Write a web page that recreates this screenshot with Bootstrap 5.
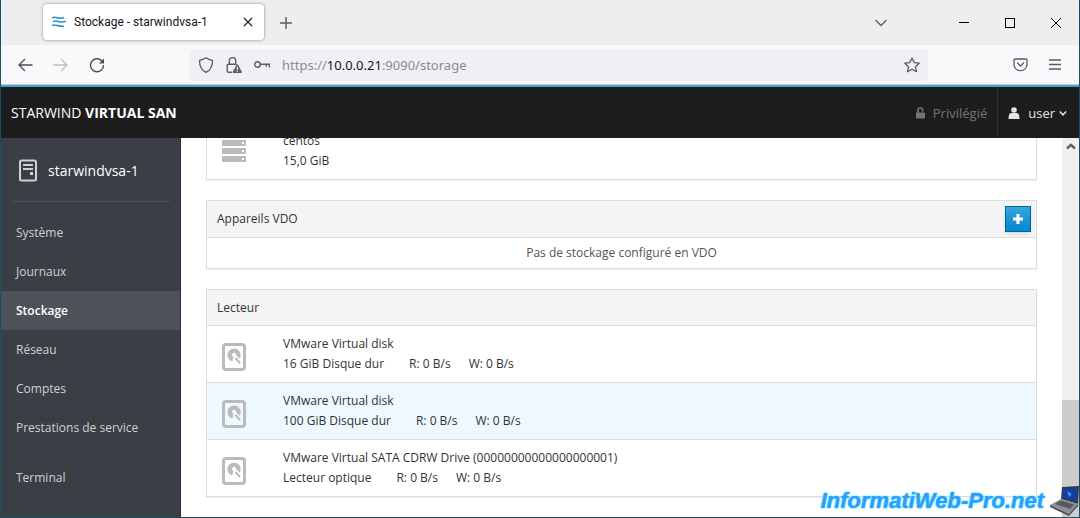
<!DOCTYPE html>
<html lang="fr">
<head>
<meta charset="utf-8">
<meta name="viewport" content="width=device-width, initial-scale=1">
<title>Stockage - starwindvsa-1</title>
<link href="https://cdn.jsdelivr.net/npm/bootstrap@5.3.0/dist/css/bootstrap.min.css" rel="stylesheet">
<style>
  body { font-family: "Open Sans", sans-serif; font-size: 12px; line-height: 20px; color: #333; }
  .window { height: 100vh; border: 1px solid #1f4e68; border-top: 0; }
  .window svg { display: block; flex: none; }
  .plain { background: none; border: 0; padding: 0; color: inherit; }
  .titlebar { height: 45px; background: #eeeeee; padding: 4px 18px 4px 42px; color: #15141a; }
  .tab { width: 221px; height: 36px; background: #fff; border-radius: 4px; box-shadow: 0 0 3px rgba(0,0,0,.45); padding: 0 10px 0 9px; color: #15141a; font-family: Roboto, sans-serif; }
  .window-controls { gap: 36px; color: #000; }
  .toolbar { height: 40px; background: #f9f9fb; border-bottom: 1px solid #ccc; padding: 0 17px 0 16px; color: #5b5b66; gap: 20px; }
  .urlbar { height: 32px; background: #f0f0f4; border-radius: 4px; margin-left: 65px; margin-right: 65px; padding: 0 8px; gap: 12px; }
  .address { font-family: "Noto Sans", sans-serif; font-size: 13px; color: #8b8b92; }
  .address b { font-weight: 400; color: #15141a; }
  .app-header { height: 53px; background: #1d1d1d; border-top: 2px solid #39a5dc; padding-left: 10px; color: #fff; font-size: 14px; flex: none; }
  .privileged { color: #72767b; padding-right: 10px; font-size: 13px; gap: 7px; }
  .account { border-left: 1px solid #333; padding: 0 12px 0 10px; color: #e4e4e4; font-size: 13px; gap: 8px; }
  .sidebar { width: 180px; background: #393f44; border-right: 1px solid #292e34; flex: none; }
  .host { height: 64px; margin: 0 10px 11px 11px; padding: 2px 0 0 6px; border-bottom: 1px solid #4d5258; gap: 10px; color: #fff; font-size: 14px; text-decoration: none; }
  .sidebar .nav-link { height: 39px; padding: 10px 15px; color: #d1d1d1; }
  .sidebar .nav-link.active { background: #4d5258; color: #fff; font-weight: 600; }
  .sidebar .nav-tools { padding-top: 11px; }
  .content { padding: 0 25px 20px; gap: 20px; background: #fff; }
  .panel { --bs-card-border-color: #ddd; --bs-card-border-radius: 0; --bs-card-inner-border-radius: 0; --bs-card-cap-bg: #f4f4f4; color: #333; flex: none; box-shadow: 0 1px 1px rgba(0,0,0,.05); }
  .panel .card-header { padding: 8px 10px 7px; }
  .panel .card-header.with-action { padding: 5px 5px 5px 10px; }
  .panel .empty-note { padding: 5px; color: #555; }
  .panel .list-group-item { padding: 8px 15px; border-color: #ddd; color: #333; gap: 37px; background: #fff; }
  .panel .list-group-item.hovered { background: #edf8ff; }
  .disk-icon { margin-top: 6px; }
  .rates { margin-left: 25px; gap: 18px; }
  .add-button { width: 26px; height: 26px; border: 1px solid #00659c; border-radius: 0; background: linear-gradient(#39a5dc, #0088ce); box-shadow: 0 2px 3px rgba(3,3,3,.1); }
  .scroller { width: 17px; background: #f0f0f0; flex: none; padding-top: 5px; }
  .thumb { flex: 117 0 0; background: #cdcdcd; }
  .track { flex: 257 0 0; }
  .watermark { right: 0; bottom: 0; font: italic 700 22px/32px "Liberation Sans", sans-serif; color: #2f9dfc; text-shadow: 0 0 2px #2fd5ff, 0 0 1px #2fd5ff; gap: 6px; }
</style>
</head>
<body>
<svg class="d-none" aria-hidden="true">
  <symbol id="disk" viewBox="0 0 24 28"><rect x="1.500" y="1.500" width="21" height="25" rx="2.500" fill="none" stroke="#bbb" stroke-width="3"/><path d="M12 5.500a6.800 6.800 0 0 1 6.700 6.800c0 1.300-.4 2.500-1 3.400L14 12a2 2 0 1 0-2.600 1.700l-1 4.800A6.600 6.600 0 0 1 12 5.500zM12.500 15.500l1.800-1.200 4.500 5.200-1.400 1.500z" fill="#bbb"/></symbol>
</svg>
<div class="window position-relative d-flex flex-column overflow-hidden">
  <div class="titlebar d-flex align-items-start flex-shrink-0">
    <div class="tab d-flex align-items-center">
      <svg width="14" height="12" viewBox="0 0 14 12" fill="none" stroke="#2b8fd0" stroke-width="1.500"><path d="M0 2c4-2.500 6 2 12-.5M1 5.800c4-2.500 6 2 13-.5M0 9.600c4-2.500 6 2 12 .5"/></svg>
      <span class="ms-2 flex-grow-1 text-nowrap">Stockage - starwindvsa-1</span>
      <button class="plain" aria-label="Fermer l'onglet"><svg width="12" height="12" viewBox="0 0 12 12" stroke="#222" stroke-width="1.200"><path d="M2 2l8 8M10 2l-8 8"/></svg></button>
    </div>
    <div class="d-flex align-items-center align-self-stretch flex-grow-1 ps-3">
      <button class="plain" aria-label="Nouvel onglet"><svg width="12" height="12" viewBox="0 0 12 12" stroke="#5b5b66" stroke-width="1.400"><path d="M6 0v12M0 6h12"/></svg></button>
      <button class="plain ms-auto me-5" aria-label="Liste des onglets"><svg width="12" height="8" viewBox="0 0 12 8" fill="none" stroke="#5b5b66" stroke-width="1.300"><path d="M.5 1L6 6.500l5.500-5.500"/></svg></button>
      <div class="window-controls d-flex ms-4">
        <button class="plain" aria-label="Réduire"><svg width="10" height="10" stroke="currentColor"><path d="M0 4.500h10"/></svg></button>
        <button class="plain" aria-label="Agrandir"><svg width="10" height="10" fill="none" stroke="currentColor"><rect x=".5" y=".5" width="9" height="9"/></svg></button>
        <button class="plain" aria-label="Fermer"><svg width="10" height="10" stroke="currentColor"><path d="M0 0l10 10M10 0L0 10"/></svg></button>
      </div>
    </div>
  </div>
  <div class="toolbar d-flex align-items-center flex-shrink-0">
    <button class="plain" aria-label="Précédent"><svg width="16" height="16" viewBox="0 0 16 16" fill="none" stroke="#4c4c55" stroke-width="1.300" stroke-linecap="round" stroke-linejoin="round"><path d="M15 8H2M7.500 2.500L2 8l5.500 5.500"/></svg></button>
    <button class="plain" aria-label="Suivant" disabled><svg width="16" height="16" viewBox="0 0 16 16" fill="none" stroke="#bdbdc2" stroke-width="1.300" stroke-linecap="round" stroke-linejoin="round"><path d="M1 8h13M8.500 2.500L14 8l-5.500 5.500"/></svg></button>
    <button class="plain" aria-label="Actualiser"><svg width="16" height="16" viewBox="0 0 16 16" fill="none" stroke="#4c4c55" stroke-width="1.400"><path d="M14.500 8A6.500 6.500 0 1 1 12.500 3.500l1.500 1.500"/><path d="M15 1.500v5h-5z" fill="#4c4c55" stroke="none"/></svg></button>
    <div class="urlbar d-flex align-items-center flex-grow-1">
      <svg width="16" height="16" viewBox="0 0 16 16" fill="none" stroke="currentColor" stroke-width="1.300" stroke-linejoin="round"><path d="M8 .8c2 1.500 4 2.200 6.500 2.600 0 6-1.500 9.600-6.500 12-5-2.400-6.500-6-6.500-12C4 3 6 2.300 8 .8z"/></svg>
      <svg width="16" height="16" viewBox="0 0 16 16" fill="none" stroke="currentColor" stroke-width="1.400"><path d="M3.300 7V3.800a3.200 3.200 0 0 1 6.400 0V7M6 15.300H2.500A1.300 1.300 0 0 1 1.200 14V8.500a1.300 1.300 0 0 1 1.300-1.300H10.500"/><path d="M11.300 7.300a.8.800 0 0 1 .8.500l3.700 7a.8.800 0 0 1-.7 1.200H7.500a.8.800 0 0 1-.7-1.200l3.700-7a.8.800 0 0 1 .8-.5z" fill="currentColor" stroke="none"/><path d="M11.300 9.800v3M11.300 13.600v1.200" stroke="#f0f0f4" stroke-width="1.300"/></svg>
      <svg width="16" height="16" viewBox="0 0 16 16" fill="none" stroke="currentColor" stroke-width="1.400"><circle cx="3.500" cy="7.500" r="2.800"/><path d="M6.300 7.200H15.300v3.300M12.300 7.200v2.500"/></svg>
      <span class="address flex-grow-1">https://<b>10.0.0.21</b>:9090/storage</span>
      <button class="plain" aria-label="Marquer cette page"><svg width="16" height="16" viewBox="0 0 16 16" fill="none" stroke="currentColor" stroke-width="1.300" stroke-linejoin="round"><path d="M8 1l2.200 4.600 5 .6-3.700 3.500 1 5L8 12.200l-4.500 2.500 1-5L.8 6.200l5-.6z"/></svg></button>
    </div>
    <button class="plain" aria-label="Pocket"><svg width="15" height="14" viewBox="0 0 15 14" fill="none" stroke="currentColor" stroke-width="1.300" stroke-linecap="round" stroke-linejoin="round"><path d="M2 1h11a1 1 0 0 1 1 1v4.500a6.500 6.200 0 0 1-13 0V2a1 1 0 0 1 1-1zM4.500 5l3 3 3-3"/></svg></button>
    <button class="plain" aria-label="Menu"><svg width="14" height="12" viewBox="0 0 14 12" stroke="currentColor" stroke-width="1.300"><path d="M1 1h12M1 5.500h12M1 10h12"/></svg></button>
  </div>
  <header class="app-header d-flex align-items-stretch">
    <div class="align-self-center me-auto">STARWIND <b>VIRTUAL SAN</b></div>
    <div class="privileged d-flex align-items-center"><svg width="11" height="12" viewBox="0 0 11 12"><path d="M3 6V3.300a2.300 2.300 0 0 1 4.600 0V4.500" fill="none" stroke="currentColor" stroke-width="1.700"/><rect x="1" y="5.500" width="9" height="6" rx=".8" fill="currentColor"/></svg>Privilégié</div>
    <button class="plain account d-flex align-items-center"><svg width="12" height="12" viewBox="0 0 12 12" fill="currentColor"><circle cx="6" cy="3" r="2.800"/><path d="M3 6h6c1.500 0 2.500 2 2.500 6H.5C.5 8 1.500 6 3 6z"/></svg><span class="d-flex align-items-center gap-1">user<svg width="8" height="6" viewBox="0 0 8 6" fill="none" stroke="currentColor" stroke-width="1.500"><path d="M.8 1.500L4 4.800 7.200 1.500"/></svg></span></button>
  </header>
  <div class="d-flex flex-grow-1 overflow-hidden">
    <aside class="sidebar">
      <a href="#" class="host d-flex align-items-center"><svg width="20" height="24" viewBox="0 0 20 24" fill="none" stroke="#d1d1d1" stroke-width="2"><rect x="2" y="1.500" width="16" height="20" rx="1.500"/><path d="M5 6h10M5 10h10"/><rect x="12" y="13" width="3" height="3" fill="#d1d1d1" stroke="none"/></svg>starwindvsa-1</a>
      <nav class="nav flex-column">
        <a class="nav-link" href="#">Système</a>
        <a class="nav-link" href="#">Journaux</a>
        <a class="nav-link active" href="#" aria-current="page">Stockage</a>
        <a class="nav-link" href="#">Réseau</a>
        <a class="nav-link" href="#">Comptes</a>
        <a class="nav-link" href="#">Prestations de service</a>
      </nav>
      <nav class="nav flex-column nav-tools">
        <a class="nav-link" href="#">Terminal</a>
      </nav>
    </aside>
    <main class="content d-flex flex-column justify-content-end flex-grow-1 overflow-hidden">
      <section class="card panel">
        <div class="list-group list-group-flush">
          <div class="list-group-item d-flex align-items-center">
            <svg width="24" height="24" viewBox="0 0 24 24" fill="#bbb"><path fill-rule="evenodd" d="M0 1h24v6H0zM20 3v2h2V3zM0 9h24v6H0zM20 11v2h2v-2zM0 17h24v6H0zM20 19v2h2v-2z"/></svg>
            <div><div>centos</div><div>15,0 GiB</div></div>
          </div>
        </div>
      </section>
      <section class="card panel">
        <div class="card-header with-action d-flex align-items-center justify-content-between">Appareils VDO
          <button class="btn add-button p-0 d-flex align-items-center justify-content-center" aria-label="Ajouter"><svg width="10" height="10" stroke="#fff" stroke-width="3"><path d="M5 0v10M0 5h10"/></svg></button>
        </div>
        <div class="empty-note text-center">Pas de stockage configuré en VDO</div>
      </section>
      <section class="card panel">
        <div class="card-header">Lecteur</div>
        <div class="list-group list-group-flush">
          <div class="list-group-item d-flex align-items-center">
            <svg class="disk-icon" width="24" height="28"><use href="#disk"/></svg>
            <div><div>VMware Virtual disk</div><div class="d-flex">16 GiB Disque dur<div class="rates d-flex"><span>R: 0 B/s</span><span>W: 0 B/s</span></div></div></div>
          </div>
          <div class="list-group-item hovered d-flex align-items-center">
            <svg class="disk-icon" width="24" height="28"><use href="#disk"/></svg>
            <div><div>VMware Virtual disk</div><div class="d-flex">100 GiB Disque dur<div class="rates d-flex"><span>R: 0 B/s</span><span>W: 0 B/s</span></div></div></div>
          </div>
          <div class="list-group-item d-flex align-items-center">
            <svg class="disk-icon" width="24" height="28"><use href="#disk"/></svg>
            <div><div>VMware Virtual SATA CDRW Drive (00000000000000000001)</div><div class="d-flex">Lecteur optique<div class="rates d-flex"><span>R: 0 B/s</span><span>W: 0 B/s</span></div></div></div>
          </div>
        </div>
      </section>
    </main>
    <div class="scroller d-flex flex-column">
      <div class="track"><svg class="mx-auto" width="10" height="8" viewBox="0 0 10 8" fill="none" stroke="#606060" stroke-width="2.400"><path d="M1 5.500L5 1.800 9 5.500"/></svg></div>
      <div class="thumb"></div>
    </div>
  </div>
  <div class="watermark position-absolute d-flex align-items-center">InformatiWeb-Pro.net
    <svg width="29" height="30" viewBox="0 0 29 30"><path d="M12 1l17-1-1 18-17-5z" fill="#333b48"/><path d="M13.500 2.500L27 2l-1 13.500-13-4z" fill="#123fa6"/><path d="M17 5l5 3-3 3z" fill="#4f8ae6"/><path d="M11 13l17 5-9 10L0 19z" fill="#8d8f94"/><path d="M11 14.500l13 4-4 4.500L5 18z" fill="#55585f"/><path d="M0 19l19 9 9-10v2l-9 10L0 21z" fill="#4a4c50"/></svg>
  </div>
</div>
<script src="https://cdn.jsdelivr.net/npm/bootstrap@5.3.0/dist/js/bootstrap.bundle.min.js"></script>
</body>
</html>
